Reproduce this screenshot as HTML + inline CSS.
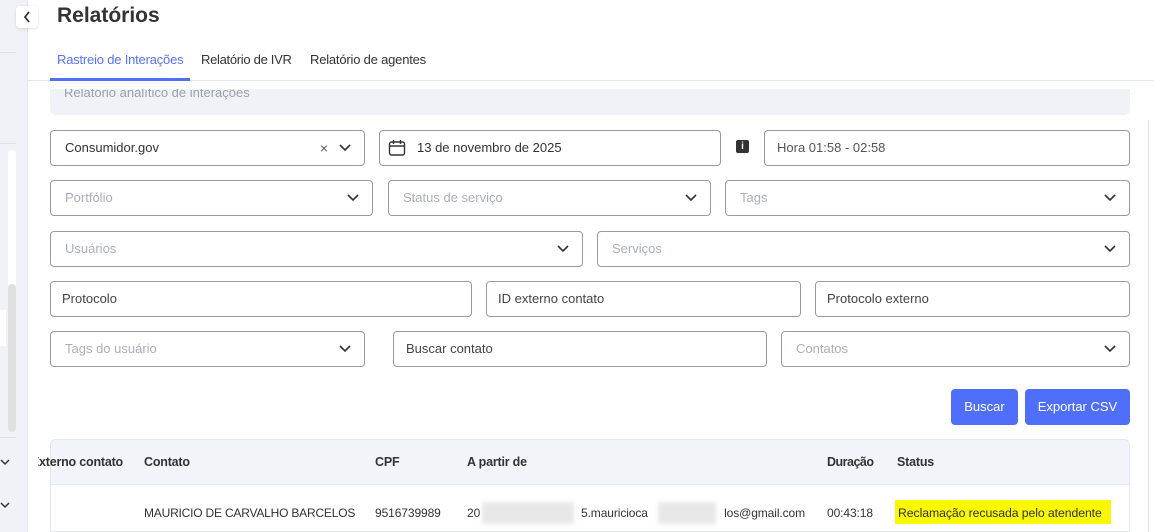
<!DOCTYPE html>
<html><head><meta charset="utf-8"><style>
*{box-sizing:border-box;margin:0;padding:0}
body{width:1154px;height:532px;overflow:hidden;background:#fff;font-family:"Liberation Sans",sans-serif;position:relative;color:#333}
.a{position:absolute}
.box{position:absolute;border:1px solid #9a9aa4;border-radius:4px;height:36px;font-size:13px;color:#333;padding-left:14px;line-height:34px;background:#fff}
.ph{color:#aab0b8}
.chev{position:absolute;right:12px;top:11px;width:14px;height:10px}
.btn{position:absolute;background:#4f6ffb;color:#fff;border-radius:4px;font-size:13px;text-align:center;line-height:36px;height:36px;top:389px}
.th{position:absolute;top:455px;font-size:12.5px;font-weight:bold;color:#333;letter-spacing:-0.2px}
.td{position:absolute;top:506px;font-size:12px;color:#333;letter-spacing:-0.1px;white-space:nowrap}
</style></head><body>
<div class="a" style="left:0;top:0;width:28px;height:532px;background:#eff2f7;border-right:1px solid #e3e7ee"></div>
<div class="a" style="left:0;top:52px;width:16px;height:1px;background:#dde2ea"></div>
<div class="a" style="left:0;top:143px;width:16px;height:1px;background:#dde2ea"></div>
<div class="a" style="left:0;top:437px;width:16px;height:1px;background:#dde2ea"></div>
<div class="a" style="left:8px;top:150px;width:8px;height:282px;background:#fff;border-radius:4px"></div>
<div class="a" style="left:8px;top:284px;width:8px;height:148px;background:#e0e0e0;border-radius:4px"></div>
<div class="a" style="left:0;top:310px;width:6px;height:36px;background:#fff"></div>
<svg class="a" style="left:0;top:458px" width="10" height="8"><path d="M1 2l4 4 4-4" stroke="#333" stroke-width="1.5" fill="none"/></svg>
<svg class="a" style="left:0;top:501px" width="10" height="8"><path d="M1 2l4 4 4-4" stroke="#333" stroke-width="1.5" fill="none"/></svg>
<div class="a" style="left:16px;top:6px;width:22px;height:22px;background:#fff;border-radius:4px;box-shadow:0 1px 3px rgba(0,0,0,.12)"></div>
<svg class="a" style="left:22px;top:10px" width="10" height="14"><path d="M7 2L3 7l4 5" stroke="#333" stroke-width="1.8" fill="none"/></svg>
<div class="a" style="left:57px;top:4px;font-size:21px;font-weight:bold;color:#333">Relatórios</div>
<div class="a" style="left:57px;top:52px;font-size:13px;color:#5874f5;letter-spacing:-0.2px">Rastreio de Interações</div>
<div class="a" style="left:201px;top:52px;font-size:13px;color:#333;letter-spacing:-0.3px">Relatório de IVR</div>
<div class="a" style="left:310px;top:52px;font-size:13px;color:#333;letter-spacing:-0.2px">Relatório de agentes</div>
<div class="a" style="left:28px;top:80px;width:1126px;height:1px;background:#e1e5ec"></div>
<div class="a" style="left:50px;top:78px;width:140px;height:3px;background:#4f6ffb"></div>
<div class="a" style="left:50px;top:89px;width:1080px;height:26px;background:#eff2f7;border-radius:0 0 6px 6px;overflow:hidden"><div style="position:absolute;left:14px;top:-4px;font-size:13px;color:#9aa0a8">Relatório analítico de interações</div></div>
<div class="a" style="left:1148px;top:120px;width:1px;height:412px;background:#e1e5ec"></div>

<div class="box" style="left:50px;top:130px;width:315px">Consumidor.gov<span class="a" style="right:36px;top:0;font-size:14px;color:#555">×</span><svg class="chev" viewBox="0 0 14 10"><path d="M2 3l5 5 5-5" stroke="#333" stroke-width="1.6" fill="none"/></svg></div>
<div class="box" style="left:379px;top:130px;width:342px;padding-left:37px">13 de novembro de 2025<svg class="a" style="left:8px;top:8px" width="18" height="18"><rect x="1.5" y="3" width="15" height="13" rx="2" stroke="#333" stroke-width="1.4" fill="none"/><path d="M1.5 7h15M5.5 1v4M12.5 1v4" stroke="#333" stroke-width="1.4"/></svg></div>
<div class="a" style="left:736px;top:140px;width:13px;height:13px;background:#333;border-radius:2px;color:#fff;font-size:10px;font-weight:bold;text-align:center;line-height:13px">i</div>
<div class="box" style="left:764px;top:130px;width:366px;padding-left:12px;color:#555">Hora 01:58 - 02:58</div>

<div class="box ph" style="left:50px;top:180px;width:323px">Portfólio<svg class="chev" viewBox="0 0 14 10"><path d="M2 3l5 5 5-5" stroke="#333" stroke-width="1.6" fill="none"/></svg></div>
<div class="box ph" style="left:388px;top:180px;width:323px">Status de serviço<svg class="chev" viewBox="0 0 14 10"><path d="M2 3l5 5 5-5" stroke="#333" stroke-width="1.6" fill="none"/></svg></div>
<div class="box ph" style="left:725px;top:180px;width:405px">Tags<svg class="chev" viewBox="0 0 14 10"><path d="M2 3l5 5 5-5" stroke="#333" stroke-width="1.6" fill="none"/></svg></div>

<div class="box ph" style="left:50px;top:231px;width:533px">Usuários<svg class="chev" viewBox="0 0 14 10"><path d="M2 3l5 5 5-5" stroke="#333" stroke-width="1.6" fill="none"/></svg></div>
<div class="box ph" style="left:597px;top:231px;width:533px">Serviços<svg class="chev" viewBox="0 0 14 10"><path d="M2 3l5 5 5-5" stroke="#333" stroke-width="1.6" fill="none"/></svg></div>

<div class="box" style="left:50px;top:281px;width:422px;padding-left:11px;color:#444">Protocolo</div>
<div class="box" style="left:486px;top:281px;width:315px;padding-left:11px;color:#444">ID externo contato</div>
<div class="box" style="left:815px;top:281px;width:315px;padding-left:11px;color:#444">Protocolo externo</div>

<div class="box ph" style="left:50px;top:331px;width:315px">Tags do usuário<svg class="chev" viewBox="0 0 14 10"><path d="M2 3l5 5 5-5" stroke="#333" stroke-width="1.6" fill="none"/></svg></div>
<div class="box" style="left:393px;top:331px;width:374px;padding-left:12px;color:#444">Buscar contato</div>
<div class="box ph" style="left:781px;top:331px;width:349px">Contatos<svg class="chev" viewBox="0 0 14 10"><path d="M2 3l5 5 5-5" stroke="#333" stroke-width="1.6" fill="none"/></svg></div>

<div class="btn" style="left:951px;width:67px">Buscar</div>
<div class="btn" style="left:1025px;width:105px">Exportar CSV</div>

<div class="a" style="left:50px;top:439px;width:1080px;height:93px;border:1px solid #e3e7ee;border-radius:6px 6px 0 0;overflow:hidden">
<div style="height:45px;background:#f1f4f8;border-bottom:1px solid #e3e7ee"></div></div>
<div class="a" style="left:38px;top:455px;width:85px;overflow:hidden;height:18px"><div class="th" style="top:0;right:0;white-space:nowrap">Externo contato</div></div>
<div class="th" style="left:144px">Contato</div>
<div class="th" style="left:375px">CPF</div>
<div class="th" style="left:467px">A partir de</div>
<div class="th" style="left:827px;letter-spacing:-0.5px">Duração</div>
<div class="th" style="left:897px">Status</div>
<div class="td" style="left:144px;letter-spacing:-0.2px">MAURICIO DE CARVALHO BARCELOS</div>
<div class="td" style="left:375px">9516739989</div>
<div class="td" style="left:467px">20</div>
<div class="a" style="left:482px;top:502px;width:92px;height:22px;background:#e8e8e8;filter:blur(2px)"></div>
<div class="td" style="left:581px;width:80px;overflow:hidden">5.mauricioca</div>
<div class="a" style="left:658px;top:502px;width:58px;height:22px;background:#e8e8e8;filter:blur(2px)"></div>
<div class="td" style="right:349px">los@gmail.com</div>
<div class="td" style="left:827px">00:43:18</div>
<div class="a" style="left:895px;top:500px;width:216px;height:24px;background:#f8f800"></div>
<div class="td" style="left:898px;font-size:12.3px">Reclamação recusada pelo atendente</div>
</body></html>
